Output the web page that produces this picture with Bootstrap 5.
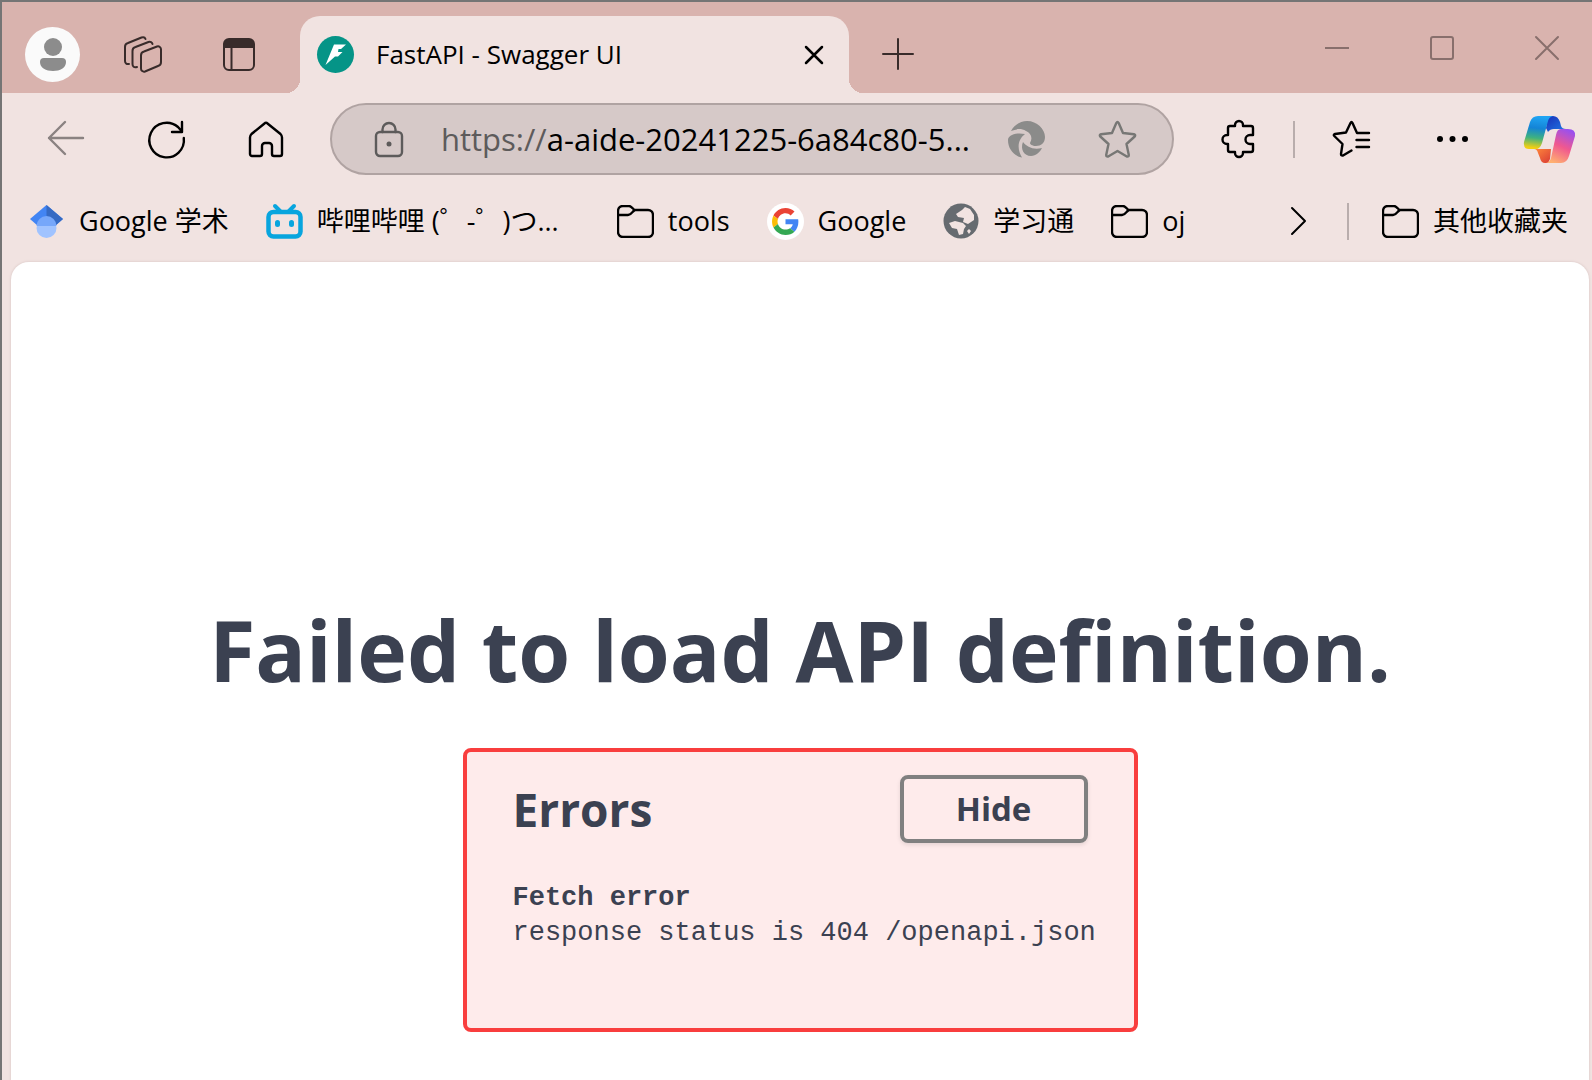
<!DOCTYPE html>
<html lang="zh-CN">
<head>
<meta charset="utf-8">
<meta name="viewport" content="width=device-width, initial-scale=1">
<title>FastAPI - Swagger UI</title>
<link href="https://cdn.jsdelivr.net/npm/bootstrap@5.3.0/dist/css/bootstrap.min.css" rel="stylesheet">
<style>
  body { font-family: "Open Sans", "Noto Sans CJK SC", sans-serif; color: #000; background: #f1e3e1; }
  .app-window { min-height: 100vh; border-top: 2px solid #757575; border-left: 2px solid #757575; background: #f1e3e1; }
  .icon-btn { background: none; border: 0; padding: 0; color: inherit; line-height: 0; flex: none; }
  svg { display: block; flex: none; overflow: visible; }
  .ln { fill: none; stroke: currentColor; stroke-width: 2; stroke-linecap: round; stroke-linejoin: round; }

  .title-strip { height: 91px; background: #d9b3ae; color: #382b2a; padding-left: 23px; }
  .left-tools { width: 275px; gap: 44px; padding-top: 14px; }
  .profile-pic { width: 55px; height: 55px; border-radius: 50%; background: #fafafa; }
  .tab-actions { margin-left: 17px; }
  .page-tab { width: 549px; background: #f1e3e1; color: #000; margin-top: 14px; border-radius: 20px 20px 0 0; padding: 0 25px 0 17px; position: relative; font-size: 26px; }
  .page-tab::before, .page-tab::after { content: ""; position: absolute; bottom: 0; width: 14px; height: 14px; }
  .page-tab::before { right: 100%; background: radial-gradient(circle at 0 0, transparent 14px, #f1e3e1 14px); }
  .page-tab::after { left: 100%; background: radial-gradient(circle at 100% 0, transparent 14px, #f1e3e1 14px); }
  .tab-name { margin-left: 22px; }
  .new-tab { margin: 36px 0 0 33px; }
  .window-controls { color: #886f6c; gap: 81px; padding: 34px 33px 0 0; }

  .nav-strip { height: 92px; padding: 0 17px 0 45px; }
  .nav-strip .ln { stroke-width: 2.4; }
  .nav-btns { width: 283px; gap: 64px; }
  .btn-back { color: #8a8281; }
  .address { flex: 1 1 0; min-width: 0; height: 72px; border: 2px solid #b0a3a2; border-radius: 36px; background: #d6c9c8; color: #5d5b5b; padding: 0 36px 0 43px; }
  .url-field { margin-left: 38px; font-size: 31px; line-height: 44px; color: #5d5b5b; white-space: nowrap; overflow: hidden; }
  .url-field b { font-weight: 400; color: #000; }
  .btn-swirl { color: #8b8b8a; margin-right: 54px; }
  .btn-star { color: #777775; }
  .nav-right { padding-left: 48px; }
  .nav-tools { gap: 38px; margin-right: 67px; }
  .nav-end { gap: 56px; }
  .divider { width: 2px; height: 37px; background: #b9adac; flex: none; }

  .bookmarks { height: 76px; padding: 0 24px 4px 26px; gap: 37px; font-size: 27px; line-height: 40px; }
  .bookmarks a { color: #000; text-decoration: none; gap: 14px; white-space: nowrap; flex: none; }
  .bm-wide { width: 314px; }
  .bm-end { gap: 33px; }

  .viewport-pane { margin: 1px 3px 0 9px; background: #fff; border-radius: 18px 18px 0 0; box-shadow: 0 0 2px 1px #e3d3d1; color: #3b4151; padding: 328px 24px 48px; }
  .fail-title { font-size: 84px; font-weight: 700; line-height: 120px; margin: 0 0 38px; text-align: center; }
  .error-box { width: 675px; max-width: 100%; border: 4px solid #f93e3e; border-radius: 8px; background: #feebeb; padding: 23px 46px 77px; }
  .error-box h2 { font-size: 46px; line-height: 62px; font-weight: 700; margin: 0; }
  .hide-btn { width: 188px; height: 68px; border: 4px solid #808080; border-radius: 8px; background: transparent; box-shadow: 0 2px 4px rgba(0,0,0,.1); font-size: 33px; font-weight: 700; color: #3b4151; padding: 0; line-height: 56px; }
  .err-text { font-family: "Liberation Mono", monospace; font-size: 27px; line-height: 35px; margin-top: 38px; white-space: nowrap; }
</style>
</head>
<body>
<svg width="0" height="0" class="position-absolute" aria-hidden="true">
  <symbol id="folder" viewBox="0 0 37 33"><path class="ln" style="stroke-width:2.400" d="M1 10V6a5 5 0 0 1 5-5h6c3 0 4 4 6 4h13a5 5 0 0 1 5 5v17a5 5 0 0 1-5 5H6a5 5 0 0 1-5-5zh10c4 0 4-4 7-5"/></symbol>
</svg>
<div class="app-window d-flex flex-column">
  <header class="title-strip d-flex">
    <div class="left-tools d-flex align-items-center">
      <button class="icon-btn profile-pic d-flex align-items-center justify-content-center" aria-label="个人资料">
        <svg width="28" height="34" viewBox="0 0 28 34" fill="#8c8c8c"><circle cx="14" cy="9" r="9"/><path d="M5 20h18a4 4 0 0 1 4 4c0 6-6 9-13 9s-13-3-13-9a4 4 0 0 1 4-4z"/></svg>
      </button>
      <button class="icon-btn" aria-label="工作区">
        <svg width="38" height="38" viewBox="0 0 38 38"><g class="ln"><path d="M20 15.500 33 10.500a3 3 0 0 1 4 3V26a4 4 0 0 1-3 4L21 35.500a3 3 0 0 1-4-3V19.500a4 4 0 0 1 3-4z"/><path d="M13 31c-3 1-4.500-.5-4.500-3V15a4 4 0 0 1 3-4L24.500 6c2-.6 3.500.2 4 2"/><path d="M5 28c-2.500.5-4-1-4-3V11a4 4 0 0 1 3-4L17.500 1.500c2-.6 3.500 0 4 1.500"/></g></svg>
      </button>
      <button class="icon-btn tab-actions" aria-label="标签页操作">
        <svg width="32" height="33" viewBox="0 0 32 33"><rect x="1" y="1" width="30" height="31" rx="5" class="ln"/><path d="M1 10V6a5 5 0 0 1 5-5h20a5 5 0 0 1 5 5v4z" fill="currentColor"/><path d="M8.500 9v23" class="ln"/></svg>
      </button>
    </div>
    <div class="page-tab d-flex align-items-center">
      <svg width="37" height="37" viewBox="0 0 37 37"><circle cx="18.500" cy="18.500" r="18.500" fill="#059487"/><path d="M17 8.500h12l-5 4.500h-2.500l-.5 3h4.500l-4.500 4.500h-3L8.500 29z" fill="#fff"/></svg>
      <span class="tab-name flex-grow-1">FastAPI - Swagger UI</span>
      <button class="icon-btn" aria-label="关闭标签页"><svg width="20" height="20" viewBox="0 0 20 20"><path d="m2 2 16 16M18 2 2 18" stroke="#000" stroke-width="2.500" stroke-linecap="round"/></svg></button>
    </div>
    <button class="icon-btn new-tab align-self-start" aria-label="新建标签页"><svg width="32" height="32" viewBox="0 0 32 32"><path d="M16 1v30M1 16h30" class="ln"/></svg></button>
    <div class="window-controls d-flex align-items-start ms-auto">
      <button class="icon-btn" aria-label="最小化"><svg width="24" height="24" viewBox="0 0 24 24"><path d="M0 12h24" stroke="currentColor" stroke-width="2"/></svg></button>
      <button class="icon-btn" aria-label="最大化"><svg width="24" height="24" viewBox="0 0 24 24"><rect x="1" y="1" width="22" height="22" rx="2" class="ln"/></svg></button>
      <button class="icon-btn" aria-label="关闭"><svg width="24" height="24" viewBox="0 0 24 24"><path d="m1 1 22 22M23 1 1 23" class="ln"/></svg></button>
    </div>
  </header>

  <nav class="nav-strip d-flex align-items-center">
    <div class="nav-btns d-flex align-items-center">
      <button class="icon-btn btn-back" aria-label="返回"><svg width="37" height="34" viewBox="0 0 37 34"><path d="M36 16H2M18 0 2 16l16 16" class="ln"/></svg></button>
      <button class="icon-btn" aria-label="刷新"><svg width="37" height="37" viewBox="0 0 37 37"><path d="M35.800 17A17.300 17.300 0 1 1 30 6l4 4.500M34 1v10H24" class="ln"/></svg></button>
      <button class="icon-btn" aria-label="主页"><svg width="34" height="35" viewBox="0 0 34 35"><path d="M15.500 1.500a2 2 0 0 1 3 0L31.500 12q1.500 1.500 1.500 3.500V32a2 2 0 0 1-2 2h-6a2 2 0 0 1-2-2v-8a3 3 0 0 0-3-3h-4a3 3 0 0 0-3 3v8a2 2 0 0 1-2 2H3a2 2 0 0 1-2-2V15.500Q1 13.500 2.500 12z" class="ln"/></svg></button>
    </div>
    <div class="address d-flex align-items-center">
      <svg width="28" height="35" viewBox="0 0 28 35"><rect x="1" y="10" width="26" height="24" rx="4" class="ln"/><path d="M7.500 10V7.500a6.500 6.500 0 0 1 13 0V10" class="ln"/><circle cx="14" cy="22" r="2.500" fill="currentColor"/></svg>
      <div class="url-field flex-grow-1">https://<b>a-aide-20241225-6a84c80-5...</b></div>
      <button class="icon-btn btn-swirl" aria-label="兼容模式"><svg width="37" height="37" viewBox="0 0 37 37" fill="currentColor"><path d="M3 10C7 3 13 0 19 0c10 0 18 8 18 16 0 6-4 9-9 9-4 0-6-2-6-3 3-5 1-10-4-12-5-3-10-2-15 0z"/><path d="M17 13C6 11 0 15 0 19c0 9 6 16 14 17.500C10 30 8 20 17 13z"/><path d="M15 21c4 5 10 8 19 6-2 4-6 8-11 8-7 0-11-7-8-14z"/></svg></button>
      <button class="icon-btn btn-star" aria-label="收藏"><svg width="37" height="37" viewBox="0 0 37 37"><path class="ln" d="M17.300 2q1.200-2 2.400 0l4.300 10 11 1.200q2 .6.700 2.300L27.500 23l2.300 11q0 2-2 1.500L18.500 30l-9.300 5.500q-2 .5-2-1.500l2.300-11-8.200-7.500Q0 13.800 2 13.200L13 12z"/></svg></button>
    </div>
    <div class="nav-right d-flex align-items-center">
      <div class="nav-tools d-flex align-items-center">
        <button class="icon-btn" aria-label="扩展"><svg width="33" height="38" viewBox="0 0 33 38"><path class="ln" d="M8 6h5V5a4 4 0 0 1 8 0v1h8a2 2 0 0 1 2 2v7h-3a4.500 4.500 0 0 0 0 9h3v6a2 2 0 0 1-2 2h-8v1a4 4 0 0 1-8 0v-1H8a2 2 0 0 1-2-2v-6H5a4.500 4.500 0 0 1 0-9h1V8a2 2 0 0 1 2-2z"/></svg></button>
        <span class="divider"></span>
        <button class="icon-btn" aria-label="收藏夹"><svg width="37" height="36" viewBox="0 0 37 36"><path class="ln" d="M36 12H24L19.500 2q-1-2-2 0L13 11.500 2 13q-2 .6-.7 2L9.500 23 8 33q0 2 2 1.500l8.500-5M23.500 19H36M23.500 26H36"/></svg></button>
      </div>
      <div class="nav-end d-flex align-items-center">
        <button class="icon-btn" aria-label="设置及其他"><svg width="31" height="6" viewBox="0 0 31 6"><circle cx="3" cy="3" r="3"/><circle cx="15.500" cy="3" r="3"/><circle cx="28" cy="3" r="3"/></svg></button>
        <button class="icon-btn" aria-label="Copilot"><svg width="51" height="47" viewBox="0 0 51 47">
          <defs>
            <linearGradient id="cpA" x1=".3" y1="0" x2=".2" y2="1"><stop offset="0" stop-color="#20a4f3"/><stop offset=".35" stop-color="#1484d6"/><stop offset=".65" stop-color="#3fb27f"/><stop offset=".95" stop-color="#f2cf12"/></linearGradient>
            <linearGradient id="cpB" x1=".7" y1="0" x2=".3" y2="1"><stop offset="0" stop-color="#9a50ee"/><stop offset=".5" stop-color="#f0588f"/><stop offset="1" stop-color="#ffb070"/></linearGradient>
            <linearGradient id="cpC" x1="0" y1="0" x2="1" y2="1"><stop offset="0" stop-color="#1a2fb8"/><stop offset="1" stop-color="#1f7be6"/></linearGradient>
            <linearGradient id="cpD" x1="0" y1="0" x2="1" y2="1"><stop offset="0" stop-color="#ff8a3c"/><stop offset="1" stop-color="#d93a35"/></linearGradient>
          </defs>
          <path d="M24 0h5q5 0 7 6l1 4q1 3 5 3H30q-4 0-6 3l-2-4z" fill="url(#cpC)"/>
          <path d="M24 47h-3q-4 0-5-5l-2-5q-1-4-4-4h17l-1 10z" fill="url(#cpD)"/>
          <path d="M14 0h15q-4 1-5 5l-6 22q-2 6-6 6H5q-6 0-5-7L6 6q2-6 8-6z" fill="url(#cpA)"/>
          <path d="M37 47H22q4-1 5-5l5-23q1-6 5-6h7q8 0 7 7l-6 20q-2 7-8 7z" fill="url(#cpB)"/></svg></button>
      </div>
    </div>
  </nav>

  <div class="bookmarks d-flex align-items-center">
    <a href="#" class="d-flex align-items-center"><svg width="37" height="37" viewBox="0 0 37 37"><path d="M18.500 2 2 16l8 7h17l8-7z" fill="#4285f4"/><path d="M18.500 2v20H28l7-6z" fill="#356ac3"/><circle cx="18.500" cy="25" r="10" fill="#a0c3ff"/><path d="M8.500 23a10 10 0 0 1 20 0z" fill="#76a7fa"/></svg><span>Google 学术</span></a>
    <a href="#" class="bm-wide d-flex align-items-center"><svg width="37" height="35" viewBox="0 0 37 35"><rect x="2.500" y="8" width="32" height="24.500" rx="5" fill="none" stroke="#08a5de" stroke-width="4.500"/><path d="m9 2 5 5M28 2l-5 5" stroke="#08a5de" stroke-width="4" stroke-linecap="round"/><rect x="9" y="16" width="5" height="7" rx="2.500" fill="#08a5de"/><rect x="23" y="16" width="5" height="7" rx="2.500" fill="#08a5de"/></svg><span>哔哩哔哩 (゜-゜)つ...</span></a>
    <a href="#" class="d-flex align-items-center"><svg width="37" height="33"><use href="#folder"/></svg><span>tools</span></a>
    <a href="#" class="d-flex align-items-center"><svg width="37" height="37" viewBox="-9 -9 66 66"><circle cx="24" cy="24" r="33" fill="#fff"/><path fill="#EA4335" d="M24 9.500c3.540 0 6.710 1.220 9.210 3.600l6.850-6.850C35.900 2.380 30.470 0 24 0 14.620 0 6.510 5.380 2.560 13.220l7.980 6.190C12.430 13.720 17.740 9.500 24 9.500z"/><path fill="#4285F4" d="M46.980 24.550c0-1.570-.15-3.090-.38-4.550H24v9.020h12.940c-.58 2.960-2.260 5.480-4.780 7.180l7.730 6c4.510-4.180 7.090-10.360 7.090-17.650z"/><path fill="#FBBC05" d="M10.530 28.590c-.48-1.450-.76-2.990-.76-4.590s.27-3.140.76-4.590l-7.980-6.190C.92 16.460 0 20.120 0 24c0 3.880.92 7.540 2.560 10.780l7.970-6.190z"/><path fill="#34A853" d="M24 48c6.480 0 11.930-2.130 15.890-5.810l-7.730-6c-2.150 1.450-4.920 2.300-8.160 2.300-6.260 0-11.570-4.220-13.470-9.910l-7.980 6.190C6.510 42.620 14.620 48 24 48z"/></svg><span>Google</span></a>
    <a href="#" class="d-flex align-items-center"><svg width="36" height="36" viewBox="0 0 36 36"><circle cx="18" cy="18" r="17.500" fill="#666b70"/><path fill="#f1e3e1" d="M13 11l6-4 3-3 5 2 4 6v5l-6 4-5-2 1-4-6-1zM6 20l6-2 8 2 3 3-2 3-1 5-4 1-2-6-5-1zM24 28l2-2 2 2-2 3z"/></svg><span>学习通</span></a>
    <a href="#" class="d-flex align-items-center"><svg width="37" height="33"><use href="#folder"/></svg><span>oj</span></a>
    <div class="bm-end d-flex align-items-center ms-auto">
      <button class="icon-btn me-2" aria-label="更多书签"><svg width="16" height="28" viewBox="0 0 16 28"><path class="ln" d="m2 1 13 13L2 27"/></svg></button>
      <span class="divider"></span>
      <a href="#" class="d-flex align-items-center"><svg width="37" height="33"><use href="#folder"/></svg><span>其他收藏夹</span></a>
    </div>
  </div>

  <main class="viewport-pane d-flex flex-column align-items-center flex-grow-1">
    <h1 class="fail-title">Failed to load API definition.</h1>
    <section class="error-box">
      <div class="d-flex justify-content-between align-items-center"><h2>Errors</h2><button class="hide-btn">Hide</button></div>
      <div class="err-text"><strong>Fetch error</strong><br>response status is 404 /openapi.json</div>
    </section>
  </main>
</div>
<script src="https://cdn.jsdelivr.net/npm/bootstrap@5.3.0/dist/js/bootstrap.bundle.min.js"></script>
</body>
</html>
